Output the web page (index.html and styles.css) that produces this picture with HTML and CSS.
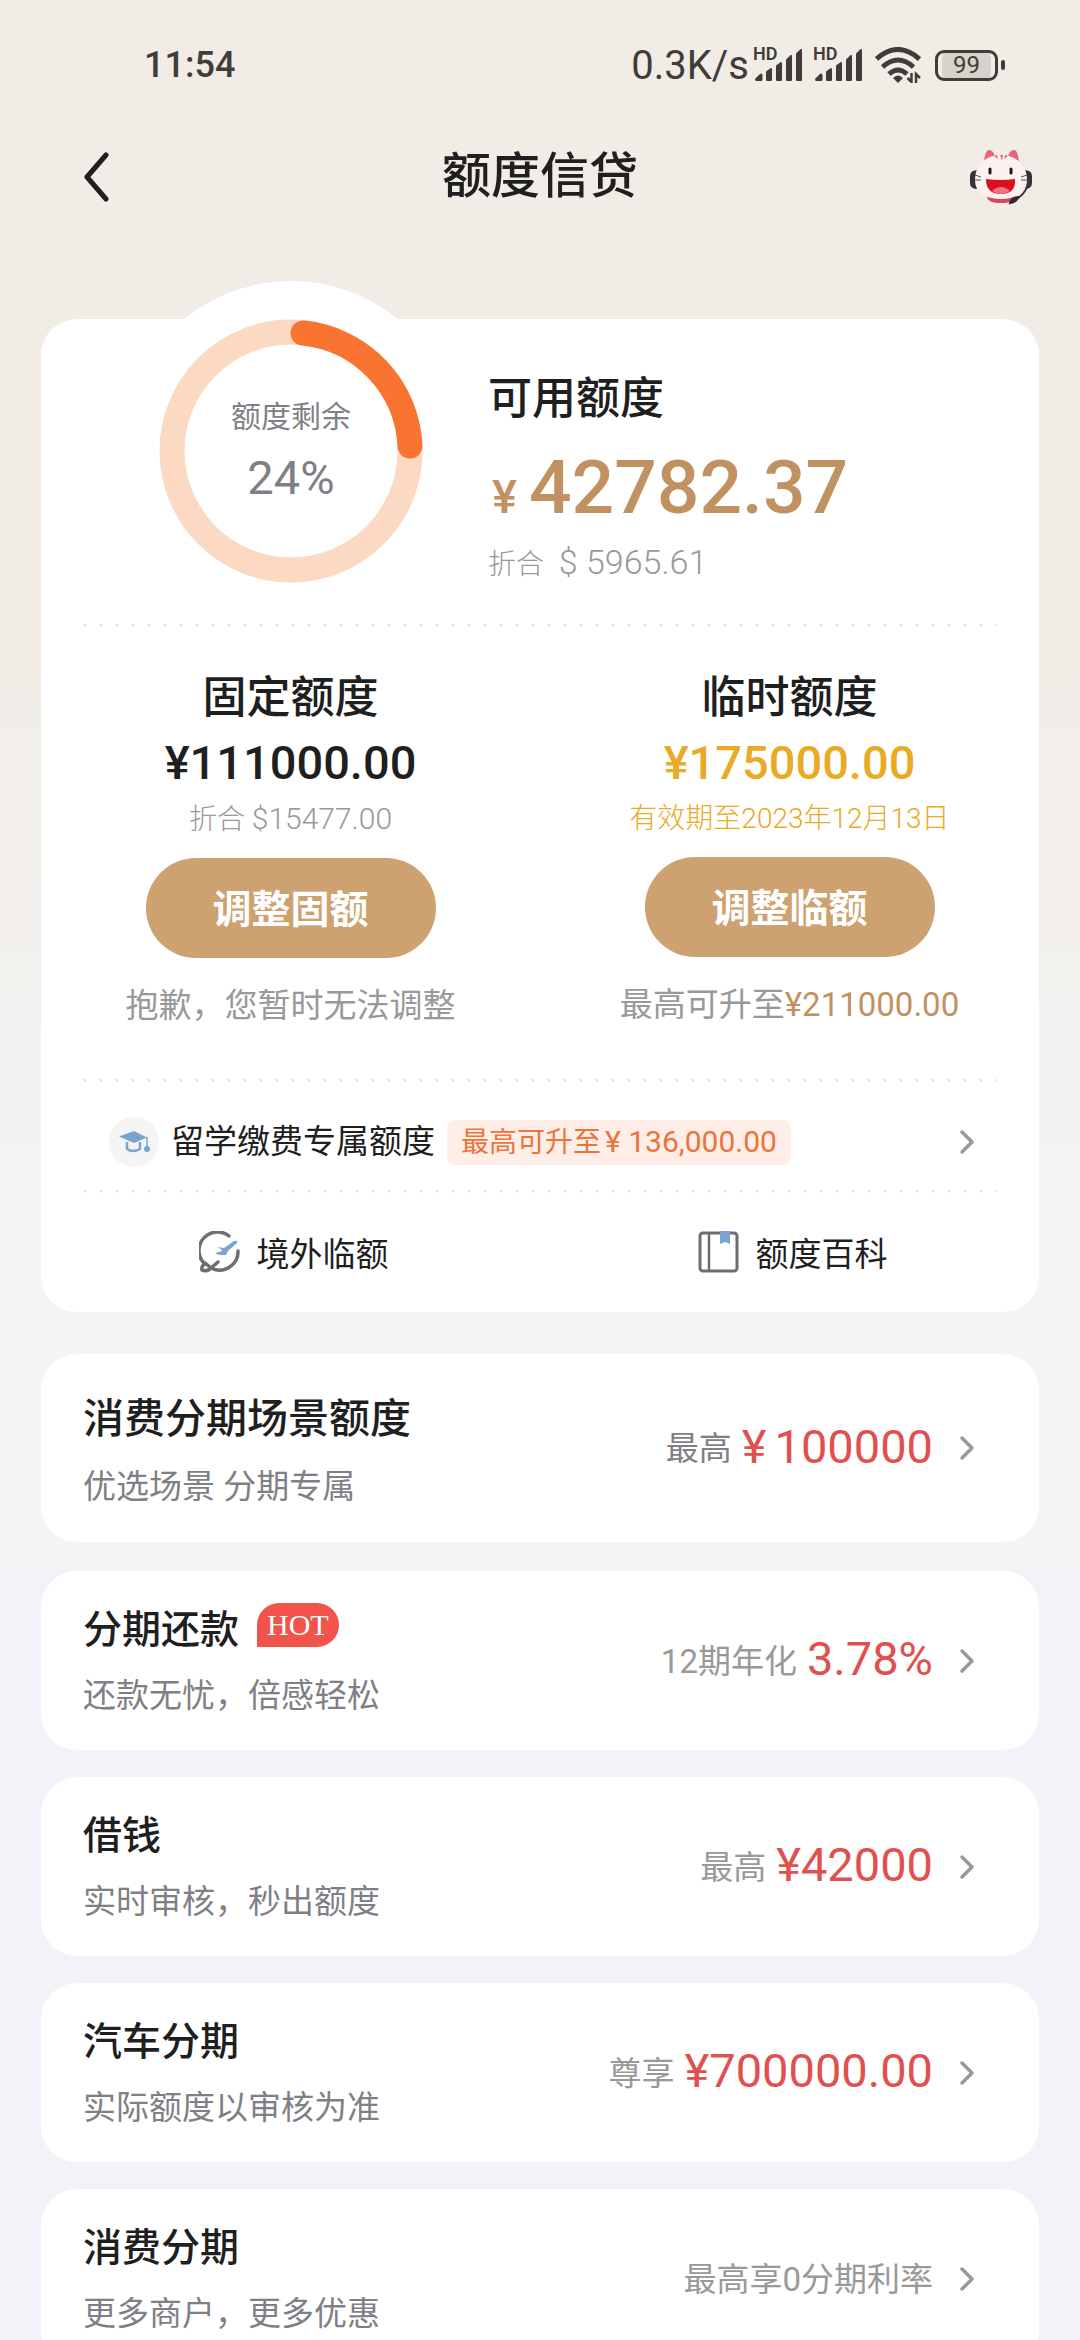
FILE: index.html
```html
<!DOCTYPE html>
<html lang="zh-CN">
<head>
<meta charset="utf-8">
<meta name="viewport" content="width=device-width, initial-scale=1">
<title>额度信贷</title>
<link rel="stylesheet" href="styles.css">
</head>
<body>
<svg class="defs" aria-hidden="true">
  <symbol id="chevron" viewBox="0 0 16 28"><path d="M3 4l10 10L3 24" fill="none" stroke="currentColor" stroke-width="3.500" stroke-linecap="round" stroke-linejoin="round"/></symbol>
  <symbol id="signal" viewBox="0 0 52 34">
    <path d="M4 31l4-4v4.500h-4.500z" stroke="currentColor" stroke-width="3" stroke-linejoin="round" fill="currentColor"/>
    <path d="M14 24l4-3v11h-4zM24 18l4-3v17h-4zM34 12l4-4v24h-4zM44 6l4-4v30h-4z" fill="currentColor" stroke="currentColor" stroke-width="2" stroke-linejoin="round"/>
  </symbol>
</svg>

<div class="status">
  <time class="clock">11:54</time>
  <div class="status-right">
    <span class="rate">0.3K/s</span>
    <span class="cell"><b>HD</b><svg class="signal"><use href="#signal"/></svg></span>
    <span class="cell"><b>HD</b><svg class="signal"><use href="#signal"/></svg></span>
    <svg class="wifi" viewBox="0 0 46 36" aria-hidden="true">
      <g fill="none" stroke="currentColor" stroke-width="5">
        <path d="M1.500 12q21-19 43 0"/><path d="M7.500 20q15.500-14 31 0"/><path d="M14 27q9-8 18 0"/>
      </g>
      <path d="M18 31q5-5 10 0l-5 5z" fill="currentColor"/>
      <path d="M36.500 26v9l-4-4M41 36v-9l4 4" fill="none" stroke="currentColor" stroke-width="2.500"/>
    </svg>
    <span class="battery"><span class="battery-body">99</span></span>
  </div>
</div>

<header class="bar">
  <button class="icon-btn" aria-label="返回"><svg class="back" viewBox="0 0 26 50"><path d="M23 3L4 25l19 22" fill="none" stroke="currentColor" stroke-width="5" stroke-linecap="round" stroke-linejoin="round"/></svg></button>
  <h1>额度信贷</h1>
  <button class="icon-btn" aria-label="客服">
    <svg class="cat" viewBox="0 0 62 56">
      <path d="M14 13q1-12 5-12 5 0 6 8zM38 9q1-8 6-8 4 0 5 12z" fill="#e4677a"/>
      <path d="M17 46h28q1 8-14 8t-14-8z" fill="#d8465e"/>
      <path d="M8 21v19q-8 0-8-6v-7q0-6 8-6zM54 21v19q8 0 8-6v-7q0-6-8-6z" fill="#35333a"/>
      <path d="M31 6c15 0 26 10 26 25 0 13-11 19-26 19S5 44 5 31C5 16 16 6 31 6z" fill="#fdf1f0"/>
      <path d="M30 6h3l-1 6zM24 7l3-1 1 4zM38 7l-3-1-1 4z" fill="#e4677a"/>
      <path d="M20 20v4M41 20v4" stroke="#1c1719" stroke-width="3" stroke-linecap="round"/>
      <path d="M16 30q15 2 29 0 1 15-14 15T16 30z" fill="#d9101f"/><path d="M22 42q9-8 18 0-9 6-18 0z" fill="#ee7480"/>
      <path d="M5 26l6 2M5 31h6M57 26l-6 2M57 31h-6" stroke="#555" stroke-width="1"/>
      <path d="M57 38q-3 8-12 13" fill="none" stroke="#35333a" stroke-width="2"/><path d="M40 54q1-5 8-6-1 5-8 6z" fill="#35262a" stroke="#35262a" stroke-width="2"/>
    </svg>
  </button>
</header>

<main>
  <section class="card quota">
    <div class="overview">
      <div class="gauge">
        <svg class="ring" viewBox="0 0 264 264" aria-hidden="true">
          <circle cx="132" cy="132" r="119" fill="none" stroke="#fbd9c3" stroke-width="25"/>
          <path d="M144 14A119 119 0 0 1 251 127" fill="none" stroke="#fa7431" stroke-width="25" stroke-linecap="round"/>
        </svg>
        <div class="gauge-text"><span>额度剩余</span><strong>24%</strong></div>
      </div>
      <div class="available">
        <h2>可用额度</h2>
        <p class="big"><small>¥</small>42782.37</p>
        <p class="usd">折合 <span>$ 5965.61</span></p>
      </div>
    </div>
    <hr>
    <div class="limits">
      <div class="limit">
        <h2>固定额度</h2>
        <p class="amount">¥111000.00</p>
        <p class="note">折合 <span>$15477.00</span></p>
        <button class="pill">调整固额</button>
        <p class="hint">抱歉，您暂时无法调整</p>
      </div>
      <div class="limit">
        <h2>临时额度</h2>
        <p class="amount gold">¥175000.00</p>
        <p class="note gold">有效期至2023年12月13日</p>
        <button class="pill">调整临额</button>
        <p class="hint">最高可升至<span>¥211000.00</span></p>
      </div>
    </div>
    <hr>
    <a class="study" href="#study">
      <span class="study-icon"><svg viewBox="0 0 32 24"><path d="M16 1L1 6.500l15 6.500 13-5.500z" fill="#7ba3d0"/><path d="M9 12v7q6 4 13 0v-7" fill="none" stroke="#7ba3d0" stroke-width="2.500"/><path d="M29 7v11" stroke="#7ba3d0" stroke-width="1.500"/><circle cx="29" cy="19" r="3" fill="#7ba3d0"/></svg></span>
      <span class="study-name">留学缴费专属额度</span>
      <span class="tag">最高可升至<span>¥ 136,000.00</span></span>
      <svg class="chevron"><use href="#chevron"/></svg>
    </a>
    <hr>
    <nav class="links">
      <a href="#abroad">
        <svg class="link-icon" viewBox="0 0 42 42"><g fill="none" stroke="#6e6e6e" stroke-width="3.500" stroke-linecap="round"><path d="M30 5A18.500 18.500 0 0 0 4 31"/><path d="M39 20A18.500 18.500 0 0 1 12 37"/><path d="M6 32q-4 4-3 7 4 2 8-1l8-7M6 32l5 4"/></g><path d="M18 16l7 1 10-7q4-1 3 2l-9 8-2 4h-7l-4-2 7-2-1-2z" fill="#7ba3d0"/></svg>
        境外临额</a>
      <a href="#wiki">
        <svg class="link-icon" viewBox="0 0 42 42"><rect x="2" y="2" width="37" height="38" rx="3" fill="none" stroke="#6e6e6e" stroke-width="3"/><path d="M11 2v38" stroke="#6e6e6e" stroke-width="2.500"/><path d="M22 0h10v13l-5-2-5 2z" fill="#7ba3d0"/></svg>
        额度百科</a>
    </nav>
  </section>

  <a class="card item first" href="#scene">
    <span class="info"><span class="name">消费分期场景额度</span><span class="desc">优选场景 分期专属</span></span>
    <span class="offer dark">最高<b>¥<i></i>100000</b></span>
    <svg class="chevron"><use href="#chevron"/></svg>
  </a>
  <a class="card item" href="#repay">
    <span class="info"><span class="name">分期还款<em class="hot">HOT</em></span><span class="desc">还款无忧，倍感轻松</span></span>
    <span class="offer">12期年化<b>3.78%</b></span>
    <svg class="chevron"><use href="#chevron"/></svg>
  </a>
  <a class="card item" href="#loan">
    <span class="info"><span class="name">借钱</span><span class="desc">实时审核，秒出额度</span></span>
    <span class="offer">最高<b>¥42000</b></span>
    <svg class="chevron"><use href="#chevron"/></svg>
  </a>
  <a class="card item" href="#car">
    <span class="info"><span class="name">汽车分期</span><span class="desc">实际额度以审核为准</span></span>
    <span class="offer">尊享<b>¥700000.00</b></span>
    <svg class="chevron"><use href="#chevron"/></svg>
  </a>
  <a class="card item" href="#consume">
    <span class="info"><span class="name">消费分期</span><span class="desc">更多商户，更多优惠</span></span>
    <span class="offer">最高享0分期利率</span>
    <svg class="chevron"><use href="#chevron"/></svg>
  </a>
</main>
</body>
</html>
```
FILE: styles.css
```css
* { box-sizing: border-box; }

html { scrollbar-width: none; }

body {
  margin: 0;
  color: #1f1f1f;
  font-family: Roboto, "Noto Sans CJK SC", sans-serif;
  background: linear-gradient(#f1ece6 0, #f1ece6 640px, #f4f4f4 1220px, #f4f4f4 1568px, #f2f3f8 1569px);
}

h1, h2, p { margin: 0; font-weight: 500; }
a { color: inherit; text-decoration: none; }
button { border: 0; padding: 0; background: none; color: inherit; font: inherit; }
svg { display: block; flex: none; }
.defs { width: 0; height: 0; position: absolute; }

/* Status bar */
.status {
  display: flex;
  justify-content: space-between;
  align-items: center;
  height: 130px;
  padding: 0 75px 0 144px;
  color: #403c37;
}
.rate { font-size: 40px; }
.clock { font-size: 36px; font-weight: 500; }
.status-right { display: flex; align-items: center; }
.cell { position: relative; margin-left: 4px; width: 56px; }
.cell b {
  position: absolute;
  left: 0;
  top: -2px;
  font-size: 18px;
  font-weight: 600;
  line-height: 16px;
}
.signal { width: 52px; height: 34px; }
.wifi { width: 46px; height: 36px; margin-left: 6px; }
.battery { display: flex; align-items: center; margin-left: 14px; }
.battery::after {
  content: "";
  width: 4px;
  height: 10px;
  margin-left: 3px;
  border-radius: 2px;
  background: currentColor;
}
.battery-body {
  width: 63px;
  height: 31px;
  border: 3px solid;
  border-radius: 9px;
  font-size: 24px;
  line-height: 25px;
  text-align: center;
  background: #d6d2cc content-box;
  padding: 0 4px;
}

/* Title bar */
.bar {
  display: grid;
  grid-template-columns: 1fr auto 1fr;
  align-items: center;
  height: 94px;
  padding: 0 48px 0 83px;
}
.bar h1 { margin-right: 35px; font-size: 49px; line-height: 72px; }
.icon-btn { width: 62px; }
.icon-btn:last-child { justify-self: end; }
.back { width: 26px; height: 50px; }
.cat { width: 62px; height: 56px; }

main {
  display: flex;
  flex-direction: column;
  gap: 27px;
  padding: 95px 41px 0;
}
.card { background: #fff; border-radius: 36px; }

/* Quota card */
.quota { margin-bottom: 15px; padding: 0 42px; }
.quota hr {
  height: 3px;
  margin: 0;
  border: 0;
  background: radial-gradient(circle at 2px 1px, #e3e3e6 1px, transparent 2px) 0 0 / 16px 3px repeat-x;
}
.overview { display: flex; height: 305px; }
.gauge {
  position: relative;
  width: 340px;
  height: 340px;
  margin: -38px 27px 0 38px;
  padding: 38px;
  border-radius: 50%;
  background: #fff;
  flex: none;
}
.ring { width: 264px; height: 264px; }
.gauge-text {
  position: absolute;
  inset: 0;
  display: flex;
  flex-direction: column;
  align-items: center;
  padding-top: 114px;
  color: #7f7f86;
  font-size: 30px;
  line-height: 44px;
}
.gauge-text strong { font-size: 47px; font-weight: 400; line-height: 78px; }
.available { padding-top: 47px; }
h2 { font-size: 44px; line-height: 66px; }
.big { color: #c19161; font-size: 75px; line-height: 110px; }
.big small { margin: 0 12px 0 4px; font-size: 47px; }
.usd { color: #999; font-size: 28px; line-height: 20px; font-weight: 300; }
.usd span { font-size: 34px; margin-left: 8px; }

.limits { display: flex; margin: 0 -42px; height: 452px; }
.limit {
  flex: 1;
  display: flex;
  flex-direction: column;
  align-items: center;
  padding-top: 38px;
}
.amount { font-size: 47px; line-height: 64px; }
.note { margin: 7px 0 21px; color: #999; font-size: 28px; line-height: 34px; font-weight: 300; }
.note span { font-size: 30px; }
.gold { color: #e9aa25; }
.pill {
  width: 290px;
  height: 100px;
  padding-bottom: 4px;
  border-radius: 50px;
  background: #cda170;
  color: #fff;
  font-size: 39px;
  font-weight: 700;
}
.hint { margin-top: 24px; color: #999; font-size: 33px; line-height: 48px; font-weight: 400; }
.hint span { color: #c19161; }

.study { display: flex; align-items: center; height: 108px; padding: 12px 22px 0 26px; }
.study-icon {
  display: grid;
  place-items: center;
  width: 50px;
  height: 50px;
  border-radius: 50%;
  background: #f4f4f4;
}
.study-icon svg { width: 32px; height: 24px; }
.study-name { margin: 0 12px; font-size: 33px; line-height: 48px; }
.tag {
  padding: 0 14px;
  border-radius: 8px;
  background: #feeee7;
  color: #ea743b;
  font-size: 28px;
  line-height: 44px;
}
.tag span { margin-left: 4px; font-size: 30px; }
.chevron { width: 16px; height: 28px; color: #999; margin-left: auto; }

.links { display: flex; margin: 0 -42px; height: 119px; }
.links a {
  flex: 1;
  display: flex;
  align-items: center;
  justify-content: center;
  gap: 16px;
  padding: 0 0 2px 6px;
  font-size: 33px;
}
.link-icon { width: 42px; height: 42px; }

/* Product cards */
.item {
  display: flex;
  align-items: center;
  padding: 0 64px 0 42px;
}
.info {
  display: flex;
  flex-direction: column;
  gap: 4px;
  padding: 26px 0 23px;
}
.first { margin-bottom: 2px; }
.first .info { gap: 6px; padding: 32px 0 24px; }
.name { display: flex; align-items: center; font-size: 39px; font-weight: 500; line-height: 66px; }
.first .name { font-size: 41px; }
.desc { color: #7f7f86; font-size: 33px; line-height: 58px; padding-bottom: 2px; }
.hot {
  margin: -10px 0 0 18px;
  padding: 0 10px;
  border-radius: 22px 22px 22px 0;
  background: #f2544b;
  color: #fff;
  font: 30px/44px "Liberation Serif", serif;
}
.offer {
  display: flex;
  align-items: center;
  gap: 10px;
  margin-left: auto;
  padding-bottom: 4px;
  color: #999;
  font-size: 33px;
}
.offer.dark { color: #7f7f86; }
.offer b { color: #e0504f; font-size: 47px; font-weight: 400; }
.offer i { margin-left: 8px; }
.item .chevron { margin-left: 26px; }
```
